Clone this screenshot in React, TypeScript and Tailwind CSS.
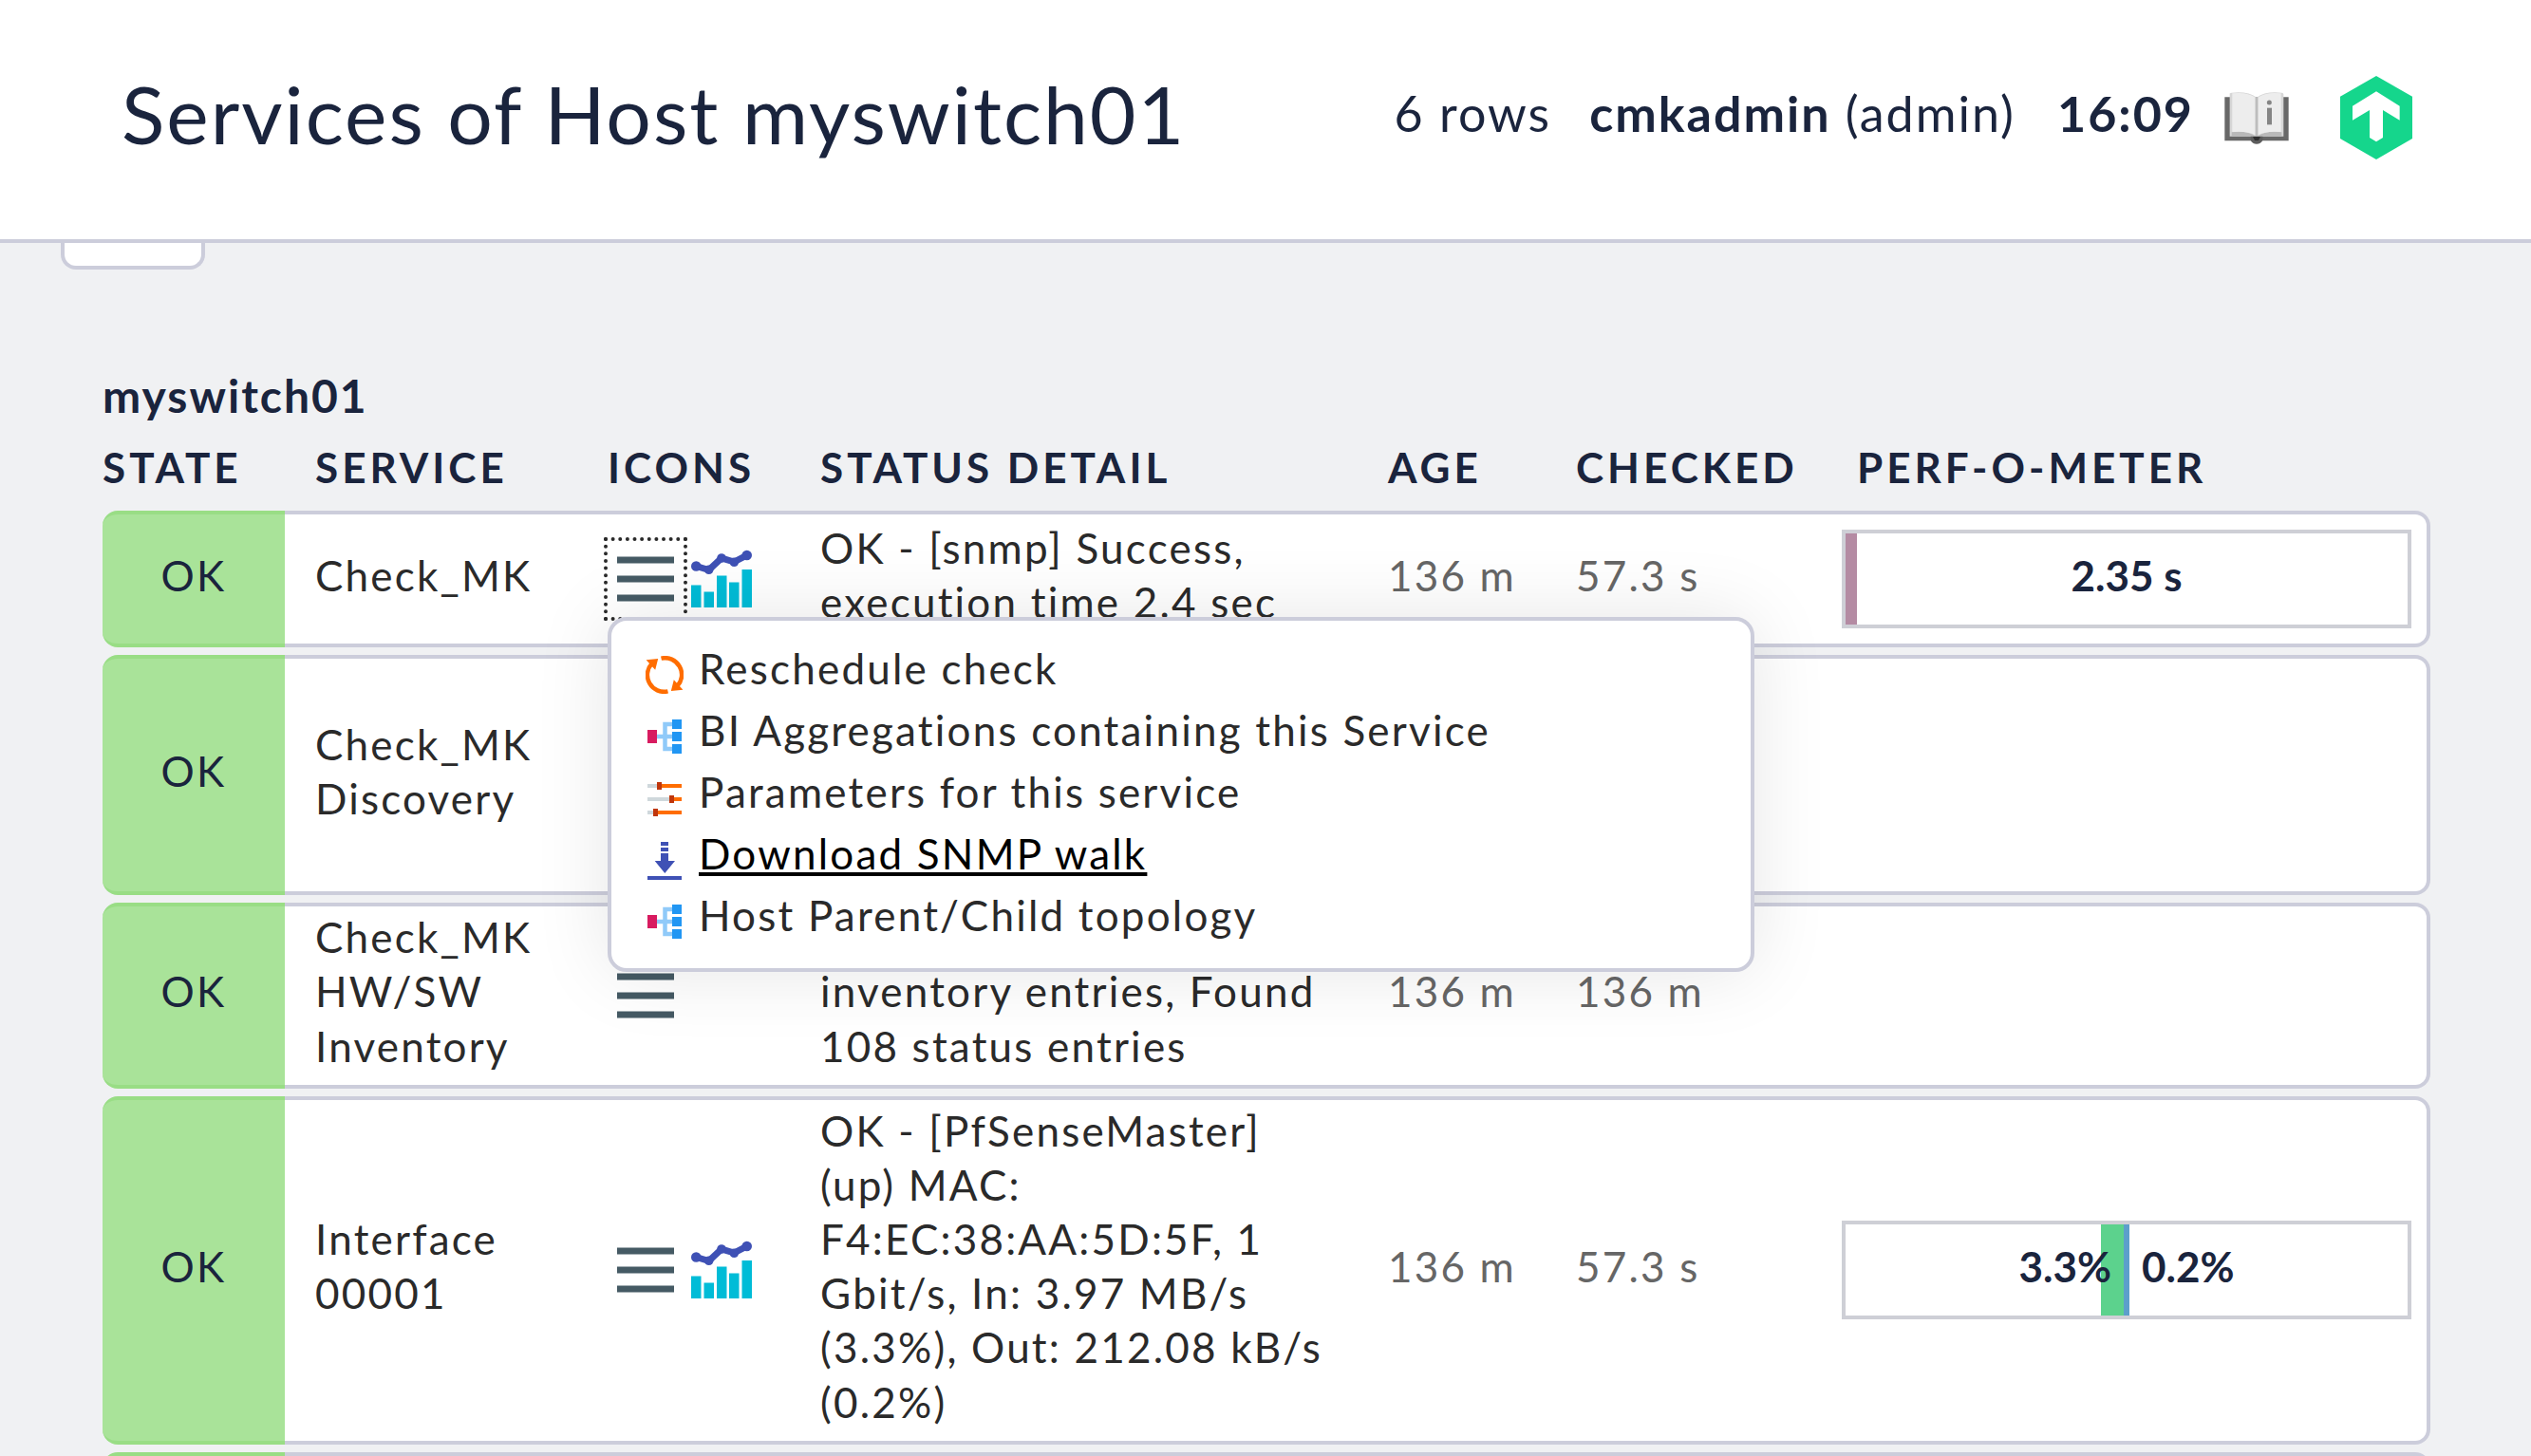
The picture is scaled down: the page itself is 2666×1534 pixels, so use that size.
import type { ReactNode } from "react";

function TreeIcon() {
  return (
    <svg viewBox="0 0 40 40" className="size-10" aria-hidden="true">
      <path d="M12 20h18M30 7h-9.500v26H30" fill="none" stroke="#90caf9" strokeWidth="4.500" />
      <path d="M2 13h10v14H2z" fill="#d81b60" />
      <path d="M28 2h10v10H28zM28 15h10v10H28zM28 28h10v10H28z" fill="#2196f3" />
    </svg>
  );
}

function RescheduleIcon() {
  return (
    <svg viewBox="0 0 40 40" className="size-10" aria-hidden="true">
      <g fill="none" stroke="#ff6d00" strokeWidth="4.500">
        <path d="M16.500 2.600A17.700 17.700 0 0 1 33.300 32" />
        <path d="M23.500 37.400A17.700 17.700 0 0 1 6.700 8" />
      </g>
      <path d="M0.600 4.300 13.200 3 10.200 14.800zM39.400 35.700 26.800 37 29.800 25.200z" fill="#ff6d00" />
    </svg>
  );
}

function SlidersIcon() {
  return (
    <svg viewBox="0 0 40 40" className="size-10" aria-hidden="true">
      <path d="M2 5h12v4H2zM2 19h25v4H2zM2 33h8v4H2z" fill="#cfd8dc" />
      <path d="M15 5h23v4H15zM28 19h10v4H28zM11 33h27v4H11z" fill="#ff6d00" />
      <path d="M12 3h5v8h-5zM25 17h5v8h-5zM8 31h5v8H8z" fill="#bf360c" />
    </svg>
  );
}

function DownloadIcon() {
  return (
    <svg viewBox="0 0 40 42" className="h-[42px] w-10" aria-hidden="true">
      <path d="M16 1h8v4h-8zM16 7h8v4h-8zM16 13h8v8h7L20.300 34 9.700 21H16zM2 37h36v4H2z" fill="#3f51b5" />
    </svg>
  );
}

function MenuIcon() {
  return (
    <svg viewBox="0 0 80 80" className="size-20" aria-hidden="true">
      <path d="M10 16.500h60v7H10zM10 36.500h60v7H10zM10 56.500h60v7H10z" fill="#455a64" />
    </svg>
  );
}

function GraphIcon() {
  return (
    <svg viewBox="0 0 80 80" className="size-20" aria-hidden="true">
      <path d="M8 46.500h10.500V70H8zM21.500 53.500H32V70H21.500zM35 36.500h10.500V70H35zM48 43.500h10.500V70H48zM61.500 30H72v40H61.500z" fill="#00bcd7" />
      <path d="M13.300 26.500 26.700 30.500 40 18 53.300 22 66.700 15" fill="none" stroke="#3f51b5" strokeWidth="7" strokeLinejoin="round" />
      <g fill="#3f51b5">
        <circle cx="13.300" cy="26.500" r="5.300" />
        <circle cx="26.700" cy="30.300" r="4.800" />
        <circle cx="40" cy="18" r="4.800" />
        <circle cx="53.300" cy="22.300" r="4.800" />
        <circle cx="66.700" cy="15" r="5.300" />
      </g>
    </svg>
  );
}

function ManualIcon() {
  return (
    <svg viewBox="70 112 202 168" className="h-14 w-[68px]" aria-hidden="true">
      <path d="M70 131h202v138H70z" fill="#686868" />
      <path d="M86 122q-2-4 6-5 50-6 79 15 29-21 79-15 6 1 6 5v133H86z" fill="#d6d6d6" />
      <path d="M92 254V242q50-6 76 13zM250 254V242q-50-6-76 13z" fill="#b9b9b9" />
      <path d="M94 119q48-5 73 13v119q-25-14-73-10zM248 119q-48-5-73 13v119q25-14 73-10z" fill="#ededed" />
      <path d="M167 131h8v124h-8z" fill="#bdbdbd" />
      <path d="M152 255h38v13q-6 11-19 11t-19-11z" fill="#5c5c5c" />
      <path d="M159 256h24l-6 12h-12z" fill="#2e2e2e" />
      <circle cx="211" cy="148" r="7.500" fill="#858585" />
      <path d="M204 165h15v53h-15z" fill="#858585" />
    </svg>
  );
}

function Logo() {
  return (
    <svg viewBox="435 60 228 264" className="h-[88px] w-[76px]" aria-hidden="true">
      <path d="M549 60 663 125V258L549 324 435 258V125z" fill="#15d68c" />
      <path d="M549 109 623 155V200L570 168V255L549 268 528 255V168L474 200V155z" fill="#fff" />
    </svg>
  );
}

const menuItems: { label: string; icon: ReactNode; active?: boolean }[] = [
  { label: "Reschedule check", icon: <RescheduleIcon /> },
  { label: "BI Aggregations containing this Service", icon: <TreeIcon /> },
  { label: "Parameters for this service", icon: <SlidersIcon /> },
  { label: "Download SNMP walk", icon: <DownloadIcon />, active: true },
  { label: "Host Parent/Child topology", icon: <TreeIcon /> },
];

function ActionMenu() {
  return (
    <ul className="absolute left-0 top-full z-10 w-[1208px] rounded-[20px] border-4 border-[#cccddb] bg-white pb-[23px] pl-9 pr-4 pt-[18px] shadow-[0_0_80px_rgba(0,0,0,0.1)]">
      {menuItems.map((item) => (
        <li key={item.label} className="h-[65px]">
          <a
            href="#"
            className={
              item.active
                ? "flex items-start gap-4 text-black underline decoration-4 underline-offset-[3px]"
                : "flex items-start gap-4"
            }
          >
            <span className="pt-[19px]">{item.icon}</span>
            <span className="leading-[65px]">{item.label}</span>
          </a>
        </li>
      ))}
    </ul>
  );
}

function SingleMeter({ value, percent }: { value: string; percent: number }) {
  return (
    <div className="relative h-[104px] border-4 border-[#cecfd6]">
      <div className="h-full bg-[#b48ba3]" style={{ width: `${percent}%` }} />
      <span className="absolute inset-0 flex items-center justify-center pb-2 font-bold tracking-normal text-[#1a243d]">
        {value}
      </span>
    </div>
  );
}

function DualMeter({ left, right }: { left: string; right: string }) {
  return (
    <div className="relative h-[104px] border-4 border-[#cecfd6]">
      <div className="grid h-full grid-cols-2">
        <div className="flex justify-end">
          <div className="w-[8%] bg-[#5cd28d]" />
          <div className="w-[1%] bg-[#5c9fcb]" />
        </div>
        <div>
          <div className="h-full w-[1%] bg-[#5c9fcb]" />
        </div>
      </div>
      <span className="absolute inset-0 grid grid-cols-2 items-center pb-2 font-bold tracking-normal text-[#1a243d]">
        <span className="pr-4 text-right">{left}</span>
        <span className="pl-4">{right}</span>
      </span>
    </div>
  );
}

type Service = {
  name: string;
  detail: string;
  age: string;
  checked: string;
  graph?: boolean;
  open?: boolean;
  meter?: ReactNode;
};

const services: Service[] = [
  {
    name: "Check_MK",
    detail: "OK - [snmp] Success, execution time 2.4 sec",
    age: "136 m",
    checked: "57.3 s",
    graph: true,
    open: true,
    meter: <SingleMeter value="2.35 s" percent={2} />,
  },
  {
    name: "Check_MK Discovery",
    detail: "OK - no unmonitored services found, no vanished services found, no new host labels",
    age: "136 m",
    checked: "136 m",
  },
  {
    name: "Check_MK HW/SW Inventory",
    detail: "OK - [snmp] Found 226 inventory entries, Found 108 status entries",
    age: "136 m",
    checked: "136 m",
  },
  {
    name: "Interface 00001",
    detail: "OK - [PfSenseMaster] (up) MAC: F4:EC:38:AA:5D:5F, 1 Gbit/s, In: 3.97 MB/s (3.3%), Out: 212.08 kB/s (0.2%)",
    age: "136 m",
    checked: "57.3 s",
    graph: true,
    meter: <DualMeter left="3.3%" right="0.2%" />,
  },
];

function ServiceRow({ service }: { service: Service }) {
  return (
    <tr>
      <td className="rounded-l-2xl border-y-4 border-[#99dd85] bg-[#a9e399] pb-3 pt-1 text-center text-[#1a243d]">OK</td>
      <td className="border-y-4 border-[#cccddb] bg-white pb-3 pl-8 pt-1">
        <a href="#">{service.name}</a>
      </td>
      <td className="border-y-4 border-[#cccddb] bg-white py-2 pl-8">
        <div className="flex">
          <div className="relative">
            <button
              type="button"
              aria-label="Open the action menu"
              className={
                service.open ? "block outline-4 outline-dotted outline-[#2a2a2a]" : "block"
              }
            >
              <MenuIcon />
            </button>
            {service.open && <ActionMenu />}
          </div>
          {service.graph && (
            <a href="#" aria-label="Show graphs">
              <GraphIcon />
            </a>
          )}
        </div>
      </td>
      <td className="border-y-4 border-[#cccddb] bg-white px-8 pb-3 pt-1">{service.detail}</td>
      <td className="border-y-4 border-[#cccddb] bg-white pb-3 pl-8 pt-1 text-[#666666]">{service.age}</td>
      <td className="border-y-4 border-[#cccddb] bg-white pb-3 pl-8 pt-1 text-[#666666]">{service.checked}</td>
      <td className="rounded-r-2xl border-y-4 border-r-4 border-[#cccddb] bg-white p-4">{service.meter}</td>
    </tr>
  );
}

export default function App() {
  return (
    <div className="flex h-screen flex-col overflow-hidden bg-[#f0f1f3] font-[Lato,sans-serif] text-[44px] leading-[1.3] tracking-wider text-[#2a2a2a]">
      <header className="flex h-64 shrink-0 items-center border-b-4 border-[#cccddb] bg-white pb-1 pl-32 pr-[125px] text-[52px] tracking-[2px] text-[#1a243d]">
        <h1 className="mr-auto pb-2 text-[84px]">Services of Host myswitch01</h1>
        <span className="mr-10 pb-2">6 rows</span>
        <span className="mr-11 pb-2">
          <b>cmkadmin</b> (admin)
        </span>
        <b className="mr-8 pb-2">16:09</b>
        <a href="#" aria-label="User manual" className="mr-[54px]">
          <ManualIcon />
        </a>
        <a href="#" aria-label="Checkmk">
          <Logo />
        </a>
      </header>

      <main className="min-h-0 flex-1 overflow-hidden">
        <button
          type="button"
          aria-label="Page options"
          className="ml-16 block h-7 w-[152px] rounded-b-2xl border-x-4 border-b-4 border-[#cccddb] bg-white"
        />
        <section className="pl-[108px] pr-[106px] pt-[102px]">
          <h2 className="pb-0.5 text-[48px] font-bold tracking-[2px] text-[#1a243d]">myswitch01</h2>
          <table className="w-full table-fixed border-separate border-spacing-x-0 border-spacing-y-2">
            <colgroup>
              <col className="w-[192px]" />
              <col className="w-[308px]" />
              <col className="w-[224px]" />
              <col />
              <col className="w-[198px]" />
              <col className="w-[296px]" />
              <col className="w-[636px]" />
            </colgroup>
            <thead>
              <tr className="h-[72px] text-left tracking-[4px] text-[#1a243d]">
                <th className="pb-1">STATE</th>
                <th className="pb-1 pl-8">SERVICE</th>
                <th className="pb-1 pl-8">ICONS</th>
                <th className="pb-1 pl-8">STATUS DETAIL</th>
                <th className="pb-1 pl-8">AGE</th>
                <th className="pb-1 pl-8">CHECKED</th>
                <th className="pb-1 pl-8">PERF-O-METER</th>
              </tr>
            </thead>
            <tbody>
              {services.map((service) => (
                <ServiceRow key={service.name} service={service} />
              ))}
              <tr className="h-36">
                <td className="rounded-l-2xl border-y-4 border-[#99dd85] bg-[#a9e399]" />
                <td colSpan={6} className="rounded-r-2xl border-y-4 border-r-4 border-[#cccddb] bg-white" />
              </tr>
            </tbody>
          </table>
        </section>
      </main>
    </div>
  );
}
